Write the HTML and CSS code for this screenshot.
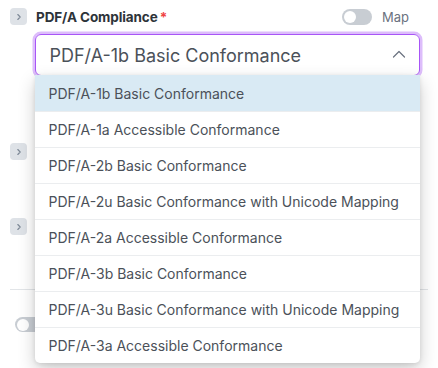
FILE: index.html
```html
<!DOCTYPE html>
<html>
<head>
<meta charset="utf-8">
<link rel="stylesheet" href="styles.css">
</head>
<body>
<div class="panel">
  <div class="head">
    <span class="exp"><svg width="8" height="8" viewBox="0 0 8 8"><path d="M2.8 1.5 L5.2 4 L2.8 6.5" fill="none" stroke="#7d8896" stroke-width="1.1" stroke-linecap="round" stroke-linejoin="round"/></svg></span>
    <span class="label">PDF/A Compliance<span class="req">*</span></span>
    <span class="spacer"></span>
    <span class="toggle"><span class="knob"></span></span>
    <span class="map">Map</span>
  </div>
  <div class="selwrap">
    <div class="select">
      <span class="value">PDF/A-1b Basic Conformance</span>
      <svg class="caret" width="14" height="8" viewBox="0 0 14 8"><path d="M1.5 7 L7 1.5 L12.5 7" fill="none" stroke="#6b7280" stroke-width="1.2" stroke-linecap="round" stroke-linejoin="round"/></svg>
    </div>
    <ul class="menu">
      <li class="active">PDF/A-1b Basic Conformance</li>
      <li>PDF/A-1a Accessible Conformance</li>
      <li>PDF/A-2b Basic Conformance</li>
      <li>PDF/A-2u Basic Conformance with Unicode Mapping</li>
      <li>PDF/A-2a Accessible Conformance</li>
      <li>PDF/A-3b Basic Conformance</li>
      <li>PDF/A-3u Basic Conformance with Unicode Mapping</li>
      <li>PDF/A-3a Accessible Conformance</li>
    </ul>
  </div>
  <div class="row r1"><span class="exp"><svg width="8" height="8" viewBox="0 0 8 8"><path d="M2.8 1.5 L5.2 4 L2.8 6.5" fill="none" stroke="#7d8896" stroke-width="1.1" stroke-linecap="round" stroke-linejoin="round"/></svg></span></div>
  <div class="row r2"><span class="exp"><svg width="8" height="8" viewBox="0 0 8 8"><path d="M2.8 1.5 L5.2 4 L2.8 6.5" fill="none" stroke="#7d8896" stroke-width="1.1" stroke-linecap="round" stroke-linejoin="round"/></svg></span></div>
  <div class="divider"></div>
  <div class="row r3"><span class="toggle small"><span class="knob"></span></span></div>
</div>
</body>
</html>
```

FILE: styles.css
```css
* { box-sizing: border-box; }
html, body { margin: 0; padding: 0; background: #ffffff; }
body { font-family: Inter, "Noto Sans", sans-serif; width: 438px; height: 368px; overflow: hidden; }
.panel { padding: 8px 0 0 10px; width: 428px; }
.head { display: flex; align-items: center; height: 17px; }
.exp { width: 17px; height: 17px; border-radius: 4px; background: #dee2e7; display: flex; align-items: center; justify-content: center; flex: none; }
.label { margin-left: 9px; font-size: 13.5px; font-weight: 700; color: #2d3339; letter-spacing: -0.1px; }
.req { color: #ef4444; margin-left: 2px; }
.spacer { flex: 1; }
.toggle { width: 30px; height: 16px; border-radius: 8px; background: #c8cdd3; display: flex; align-items: center; padding-left: 2px; }
.knob { width: 12px; height: 12px; border-radius: 50%; background: #ffffff; }
.map { margin-left: 10px; margin-right: 19px; font-size: 13px; color: #6b7280; }
.selwrap { position: relative; margin: 9px 0 0 25px; width: 385px; }
.select { height: 42px; border: 1.5px solid #a855f7; border-radius: 6px; box-shadow: 0 0 0 2.5px #ddbdfb; display: flex; align-items: center; padding: 0 13px 0 13.5px; }
.value { flex: 1; font-size: 18px; color: #4b5159; }
.caret { margin-top: -2px; }
.menu { position: absolute; left: 0; top: 41px; width: 385px; margin: 0; padding: 0; list-style: none; background: #fff; border-radius: 0 0 5px 5px; box-shadow: 0 7px 18px rgba(0,0,0,0.2), 0 1px 4px rgba(0,0,0,0.1); z-index: 5; overflow: hidden; }
.menu li { height: 36px; display: flex; align-items: center; padding-left: 13.5px; font-size: 14px; color: #4b5159; border-top: 1px solid #ebedef; }
.menu li:first-child { border-top: none; }
.menu li.active { background: #d9eaf4; }
.row { height: 17px; display: flex; align-items: center; }
.r1 { margin-top: 67px; }
.r2 { margin-top: 58px; }
.divider { margin-top: 54px; height: 1px; background: #e2e5e8; width: 418px; }
.r3 { margin-top: 27px; padding-left: 5px; height: 15px; }
.toggle.small { height: 15px; }
```
